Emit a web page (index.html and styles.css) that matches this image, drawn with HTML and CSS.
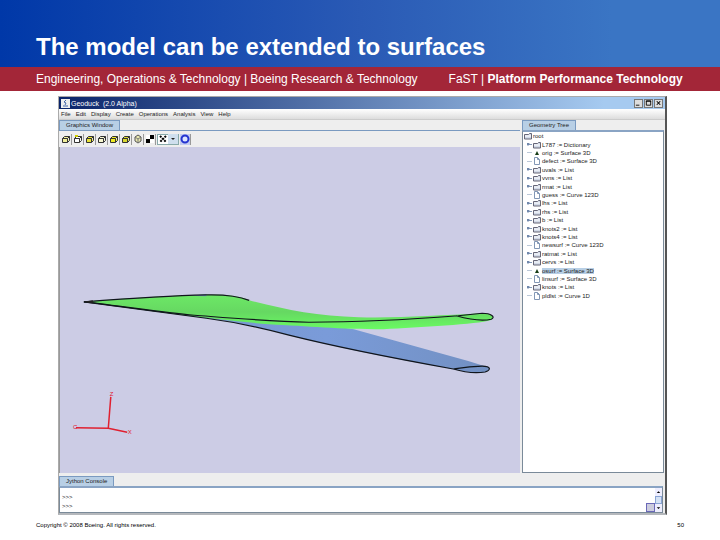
FILE: index.html
```html
<!doctype html>
<html lang="en">
    <head>
        <meta charset="utf-8">
        <meta name="viewport" content="width=device-width, initial-scale=1.0">
        <title>The model can be extended to surfaces</title>
        <link rel="stylesheet" href="styles.css">
    </head>
    <body>
        <svg class="sprite" aria-hidden="true">
            <symbol id="folder" viewBox="0 0 8 8">
                <path d="M.5 2.500h4l1-1h2v5.500h-7z" fill="#d2dae8" stroke="#667"/>
                <path d="M1 4h6" stroke="#fff"/>
            </symbol>
            <symbol id="file" viewBox="0 0 8 8">
                <path d="M1.500.5h3l2 2v5h-5z" fill="#fff" stroke="#8297b5"/>
                <path d="M4.500.5v2h2" fill="none" stroke="#8297b5"/>
            </symbol>
            <symbol id="surface" viewBox="0 0 8 8">
                <path d="M2 6 4 2l2 4z" fill="#163c16"/>
            </symbol>
            <symbol id="cube" viewBox="0 0 10 10">
                <path d="M1.500 4.500h5v4h-5zM1.500 4.500l2-2h5l-2 2M8.500 2.500v4l-2 2" stroke="#333"/>
            </symbol>
        </svg>

        <header>
            <h1>The model can be extended to surfaces</h1>
            <div class="subtitle">
                <span>Engineering, Operations &amp; Technology | Boeing Research &amp; Technology</span>
                <span>FaST | <b>Platform Performance Technology</b></span>
            </div>
        </header>

        <main class="window">
            <div class="titlebar">
                <svg class="app-icon" viewBox="0 0 9 9"><path d="M0 0h9v9H0z" fill="#eee"/><path d="M5 1 3 3l2 1-1 2M2 7h5" fill="none" stroke="#46a"/></svg>
                <span class="name">Geoduck&nbsp; (2.0 Alpha)</span>
                <button type="button" aria-label="Minimize"><svg viewBox="0 0 8 8"><path d="M1 6.500h4" stroke="#000" stroke-width="1"/></svg></button>
                <button type="button" aria-label="Maximize"><svg viewBox="0 0 8 8"><path d="M1.500 1.500h5v5h-5zM1 2h6" fill="none" stroke="#000"/></svg></button>
                <button type="button" aria-label="Close"><svg viewBox="0 0 8 8"><path d="m2 2 4 4m0-4L2 6" stroke="#000" stroke-width="1.200"/></svg></button>
            </div>
            <nav class="menubar">
                <button type="button">File</button>
                <button type="button">Edit</button>
                <button type="button">Display</button>
                <button type="button">Create</button>
                <button type="button">Operations</button>
                <button type="button">Analysis</button>
                <button type="button">View</button>
                <button type="button">Help</button>
            </nav>

            <div class="panes">
                <section class="pane graphics">
                    <h2 class="tab">Graphics Window</h2>
                    <div class="toolbar">
                        <button type="button" aria-label="Box"><svg viewBox="0 0 10 10" fill="#f0ee9a"><use href="#cube"/></svg></button>
                        <button type="button" aria-label="Front"><svg viewBox="0 0 10 10" fill="#fff"><use href="#cube"/><path d="M2 2h3" stroke="#cc0" stroke-width="2"/></svg></button>
                        <button type="button" aria-label="Back"><svg viewBox="0 0 10 10" fill="#e8e438"><use href="#cube"/></svg></button>
                        <button type="button" aria-label="Left"><svg viewBox="0 0 10 10" fill="#f8f8d0"><use href="#cube"/></svg></button>
                        <button type="button" aria-label="Right"><svg viewBox="0 0 10 10" fill="#f0ec20"><use href="#cube"/></svg></button>
                        <button type="button" aria-label="Top"><svg viewBox="0 0 10 10" fill="#d8d830"><use href="#cube"/></svg></button>
                        <button type="button" aria-label="Isometric"><svg viewBox="0 0 10 10"><path d="m5 1 3 2v4L5 9 2 7V3z" fill="#e8e8b0" stroke="#555"/><path d="m2 3 3 2 3-2M5 5v4" fill="none" stroke="#777"/></svg></button>
                        <button type="button" aria-label="Shading"><svg viewBox="0 0 10 10"><path d="M5 1h4v4H5zM1 5h4v4H1z" fill="#000"/><path d="M1 1h4v4H1zM5 5h4v4H5z" fill="#fff"/></svg></button>
                        <button type="button" class="combo" aria-label="Point style">
                            <svg viewBox="0 0 10 10"><path d="m2 2 6 6m0-6L2 8" stroke="#000" stroke-width="2" stroke-dasharray="2 1"/></svg>
                            <svg class="arrow" viewBox="0 0 10 10"><path d="M3 4h4L5 6z" fill="#222"/></svg>
                        </button>
                        <button type="button" class="ring" aria-label="Rotate"><svg viewBox="0 0 10 10"><circle cx="5" cy="5" r="3.500" fill="#dde4ff" stroke="#2434d0" stroke-width="2"/></svg></button>
                    </div>
                    <div class="canvas">
                        <svg viewBox="60 147 462 324" role="img" aria-label="Wing surfaces">
                            <defs>
                                <linearGradient id="green" x1="0" y1="0" x2="0" y2="1">
                                    <stop offset="0" stop-color="#6de866"/>
                                    <stop offset=".5" stop-color="#66d862"/>
                                    <stop offset="1" stop-color="#69fa62"/>
                                </linearGradient>
                                <linearGradient id="blue" x1="0" y1="0" x2="1" y2="0">
                                    <stop offset="0" stop-color="#7795c8"/>
                                    <stop offset=".6" stop-color="#7a9bd9"/>
                                    <stop offset="1" stop-color="#7290c2"/>
                                </linearGradient>
                            </defs>
                            <path d="M84 302.500C118 307 160 313 207 319C244 324 268 330 290 336C350 351 405 361 455 370C465 373 477 374.500 487 373C493 371 492 367 486 367L470 362L355 330L240 312Z" fill="url(#blue)"/>
                            <path d="M84 302.500C130 299 164 296.500 207 295.500C230 295 242 297 250 301C285 310 318 317 360 318C400 319 440 316 484 314C494 314 498 319 492 321C480 325 420 328 385 330C340 330 310 327 270 325C210 320 145 311 84 302.500Z" fill="url(#green)"/>
                            <path d="m190 296.500 17-1.500v2z" fill="#7896c9"/>
                            <g fill="none" stroke="#10151c" stroke-width="1.200">
                                <path d="M84 302.500C130 299 164 296.500 207 295.500C228 295 240 297 250 301"/>
                                <path d="M84 302.500C125 307 160 313 195 316C235 319 270 322 310 323C360 323 415 320 460 316.500L484 314C493 314 498 318 493 320C484 322 474 321 458 316.500"/>
                                <path d="M84 302.500C118 307 160 313 207 319C244 324 268 330 290 336C350 351 405 361 455 370C465 373 477 374.500 487 373C493 371 493 367 484 367C470 367 461 369 455 370"/>
                            </g>
                            <path d="m84 302.500 9-1.500v3z" fill="#222"/>
                            <g fill="none" stroke="#e02030" stroke-width="1.500">
                                <path d="M111 398 108.500 429.500 76 429M108.500 429.500l19 4"/>
                            </g>
                            <g class="axis">
                                <text x="110" y="397">Z</text>
                                <text x="73" y="430">C</text>
                                <text x="128" y="435">X</text>
                            </g>
                        </svg>
                    </div>
                </section>

                <section class="pane geometry">
                    <h2 class="tab">Geometry Tree</h2>
                    <div class="tree">
                        <ul>
                            <li class="root"><svg><use href="#folder"/></svg><span>root</span></li>
                            <li class="branch"><svg><use href="#folder"/></svg><span>L787 := Dictionary</span></li>
                            <li><svg><use href="#surface"/></svg><span>orig := Surface 3D</span></li>
                            <li><svg><use href="#file"/></svg><span>defect := Surface 3D</span></li>
                            <li class="branch"><svg><use href="#folder"/></svg><span>uvals := List</span></li>
                            <li class="branch"><svg><use href="#folder"/></svg><span>vvns := List</span></li>
                            <li class="branch"><svg><use href="#folder"/></svg><span>rmat := List</span></li>
                            <li><svg><use href="#file"/></svg><span>guess := Curve 123D</span></li>
                            <li class="branch"><svg><use href="#folder"/></svg><span>lhs := List</span></li>
                            <li class="branch"><svg><use href="#folder"/></svg><span>rhs := List</span></li>
                            <li class="branch"><svg><use href="#folder"/></svg><span>b := List</span></li>
                            <li class="branch"><svg><use href="#folder"/></svg><span>knots2 := List</span></li>
                            <li class="branch"><svg><use href="#folder"/></svg><span>knots4 := List</span></li>
                            <li><svg><use href="#file"/></svg><span>newsurf := Curve 123D</span></li>
                            <li class="branch"><svg><use href="#folder"/></svg><span>ratmat := List</span></li>
                            <li class="branch"><svg><use href="#folder"/></svg><span>cervs := List</span></li>
                            <li class="selected"><svg><use href="#surface"/></svg><span>osurf := Surface 3D</span></li>
                            <li><svg><use href="#file"/></svg><span>linsurf := Surface 3D</span></li>
                            <li class="branch"><svg><use href="#folder"/></svg><span>knots := List</span></li>
                            <li><svg><use href="#file"/></svg><span>pldlst := Curve 1D</span></li>
                        </ul>
                    </div>
                </section>
            </div>

            <section class="pane console">
                <h2 class="tab">Jython Console</h2>
                <div class="output">
                    <pre>&gt;&gt;&gt;
&gt;&gt;&gt;</pre>
                    <span class="grip"></span>
                    <div class="scrollbar">
                        <button type="button" aria-label="Scroll up"><svg viewBox="0 0 8 8"><path d="M2 5h4L4 3z"/></svg></button>
                        <span class="thumb"></span>
                        <button type="button" aria-label="Scroll down"><svg viewBox="0 0 8 8"><path d="M2 3h4L4 5z"/></svg></button>
                    </div>
                </div>
            </section>
        </main>

        <footer>
            <span>Copyright © 2008 Boeing. All rights reserved.</span>
            <span>50</span>
        </footer>
    </body>
</html>
```

FILE: styles.css
```css
* {
    box-sizing: border-box;
}
body {
    display: flex;
    flex-direction: column;
    min-height: 100vh;
    margin: 0;
    background: #fff;
    font-family: "Liberation Sans", Arial, sans-serif;
}
h1, h2, ul, pre {
    margin: 0;
    padding: 0;
    font-weight: normal;
}
button {
    display: flex;
    align-items: center;
    justify-content: center;
    margin: 0;
    padding: 0;
    border: 0;
    background: none;
    font: inherit;
    color: inherit;
}
.sprite {
    display: none;
}


h1 {
    padding: 33px 36px 6px;
    background: linear-gradient(90deg, #0038a8, #2a5ab5 50%, #3a75c4 85%);
    color: #fff;
    font-size: 24px;
    font-weight: bold;
    line-height: 28px;
}
.subtitle {
    display: flex;
    gap: 31px;
    padding: 0 36px;
    background: #a32638;
    color: #fff;
    font-size: 12px;
    line-height: 24px;
    white-space: nowrap;
}


.window {
    display: flex;
    flex: 1;
    flex-direction: column;
    margin: 5px 53px 0 58px;
    border: 1px solid #aaa;
    border-right: 2px solid #555;
    border-bottom: 2px solid #b5b8bc;
    background: #eee;
    color: #222;
    font-size: 6px;
}
.titlebar {
    display: flex;
    align-items: center;
    gap: 1px;
    height: 12px;
    padding: 0 2px;
    background: linear-gradient(90deg, #0a246a, #a6caf0 90%);
    color: #fff;
    font-size: 7px;
}
.titlebar .name {
    flex: 1;
}
.app-icon {
    width: 9px;
    height: 9px;
}
.titlebar button {
    width: 9px;
    height: 9px;
    border: 1px solid #777;
    background: #ddd;
}
.titlebar button svg {
    width: 8px;
    height: 8px;
}
.menubar {
    display: flex;
    gap: 5px;
    height: 11px;
    padding: 0 2px;
    border-bottom: 1px solid #ccc;
    background: linear-gradient(#fff, #ddd);
}


.panes {
    display: flex;
    flex: 1;
    gap: 2px;
    padding-right: 1px;
}
.pane {
    display: flex;
    flex-direction: column;
}
.tab {
    align-self: flex-start;
    height: 10px;
    padding: 0 6px;
    border: 1px solid #7a9ac0;
    border-bottom: 0;
    background: #b8cfe5;
    font-size: 6px;
    line-height: 9px;
}
.graphics {
    flex: 1;
}
.toolbar {
    display: flex;
    align-items: center;
    gap: 1px;
    height: 17px;
    padding: 0 2px;
    border-top: 1px solid #7a9ac0;
    background: #eee;
}
.toolbar button {
    width: 11px;
    height: 11px;
    border-right: 1px solid #999;
}
.toolbar svg {
    width: 10px;
    height: 10px;
}
.toolbar .combo {
    width: 22px;
    border: 1px solid #8aa;
    background: #fff;
}
.toolbar .combo svg {
    flex: 1;
}
.toolbar .arrow {
    background: #cfdfee;
}
.toolbar .ring {
    background: #c4ccf0;
}
.canvas {
    flex: 1;
    border-left: 1px solid #999;
    background: #cccce5;
}
.canvas svg {
    display: block;
    width: 100%;
}
.axis {
    fill: #e02030;
    font-size: 6px;
}


.geometry {
    width: 142px;
}
.tree {
    flex: 1;
    border: 1px solid #7a8a99;
    border-top: 2px solid #8aa4c4;
    background: #fff;
}
/* rows share the list height evenly */
.tree ul {
    display: grid;
    grid-auto-rows: 1fr;
    height: 168px;
    list-style: none;
}
.tree li {
    display: flex;
    align-items: center;
    padding-left: 4px;
}
.tree li::before {
    width: 5px;
    margin-right: 1px;
    border-top: 1px solid #bbc8d8;
    content: "";
}
.tree .branch::before {
    height: 3px;
    border: 0;
    background: radial-gradient(circle at 1px 1px, #7088ac 1px, transparent 2px), linear-gradient(#8297b5, #8297b5) 0 1px / 5px 1px no-repeat;
}
.tree .root {
    padding-left: 1px;
}
.tree .root::before {
    display: none;
}
.tree svg {
    width: 8px;
    height: 8px;
    margin-right: 1px;
}
.tree .selected span {
    background: #b8cfe5;
}


.console {
    padding-top: 3px;
}
.output {
    display: flex;
    align-items: flex-end;
    margin-right: 2px;
    border: 1px solid #7a8a99;
    border-top: 2px solid #8aa4c4;
    background: #fff;
}
.output pre {
    flex: 1;
    align-self: flex-start;
    padding: 5px 2px 0;
    font-family: inherit;
    line-height: 9px;
}
.grip {
    width: 9px;
    height: 9px;
    border: 1px solid #6a68b8;
    background: #ccd;
}
.scrollbar {
    display: flex;
    flex-direction: column;
    width: 7px;
    height: 24px;
    background: #eef;
}
.scrollbar svg {
    width: 7px;
    height: 8px;
}
.thumb {
    flex: 1;
    border: 1px solid #8aa4d4;
    background: #d5e2f5;
}


footer {
    display: flex;
    justify-content: space-between;
    padding: 5px 36px 10px;
    color: #000;
    font-size: 6px;
    line-height: 10px;
}
```
